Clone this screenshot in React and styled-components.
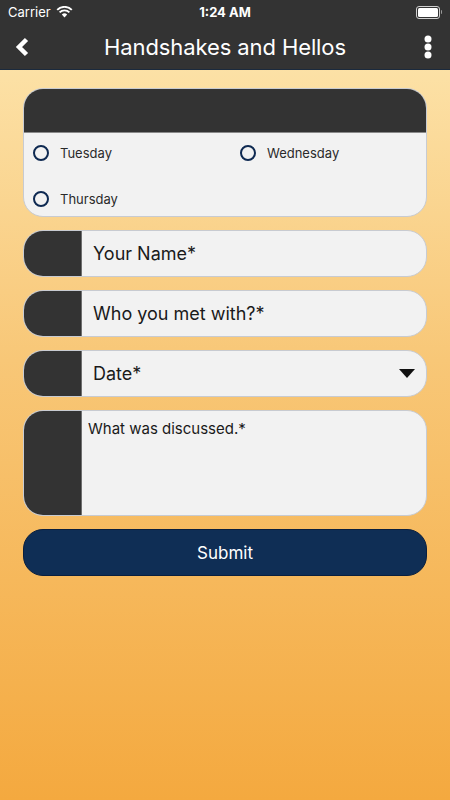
import React from "react";
import styled, { createGlobalStyle } from "styled-components";

const GlobalStyle = createGlobalStyle`
  html, body {
    margin: 0;
    padding: 0;
  }
  body {
    font-family: Inter, "Noto Sans", sans-serif;
  }
`;

const Screen = styled.div`
  width: 450px;
  min-height: 800px;
  display: flex;
  flex-direction: column;
  background: linear-gradient(180deg, #fde7b1 0%, #f8c777 45%, #f4a93f 100%);
`;

const StatusBar = styled.div`
  height: 24px;
  background: #333333;
  color: #fff;
  display: grid;
  grid-template-columns: 1fr auto 1fr;
  align-items: center;
  padding: 0 8px;
  font-size: 13px;
`;

const Carrier = styled.div`
  display: flex;
  align-items: center;
  gap: 5px;
`;

const Clock = styled.div`
  font-weight: 700;
`;

const Battery = styled.div`
  justify-self: end;
  display: flex;
  align-items: center;
  gap: 1px;
`;

const BatteryBody = styled.div`
  width: 20px;
  height: 9px;
  border: 1px solid #cfcfcf;
  border-radius: 3px;
  padding: 1px;
  & > div {
    width: 100%;
    height: 100%;
    background: #fff;
    border-radius: 1.5px;
  }
`;

const BatteryTip = styled.div`
  width: 1.5px;
  height: 4px;
  background: #999;
  border-radius: 0 1px 1px 0;
`;

const NavBar = styled.div`
  height: 45px;
  background: #333333;
  border-bottom: 1px solid #1b2a3d;
  display: flex;
  align-items: center;
  justify-content: space-between;
  padding: 0 14px;
  color: #fff;
`;

const NavTitle = styled.div`
  font-size: 22px;
  letter-spacing: -0.1px;
`;

const IconButton = styled.div`
  width: 16px;
  display: flex;
  justify-content: center;
`;

const Content = styled.div`
  display: flex;
  flex-direction: column;
  gap: 13px;
  padding: 18px 23px;
`;

const Card = styled.div`
  background: #f2f2f2;
  border: 1px solid #c8cbd1;
  border-radius: 20px;
  overflow: hidden;
`;

const CardHeader = styled.div`
  height: 43px;
  background: #333333;
  border-bottom: 1px solid #8a8a8a;
`;

const RadioGrid = styled.div`
  display: grid;
  grid-template-columns: 207px 1fr;
  grid-auto-rows: 30px;
  row-gap: 16px;
  padding: 5px 9px 2px;
`;

const RadioItem = styled.label`
  display: flex;
  align-items: center;
  gap: 11px;
  font-size: 13px;
  color: #2a2a2a;
`;

const RadioCircle = styled.span`
  width: 12px;
  height: 12px;
  border: 2px solid #0f2a52;
  border-radius: 50%;
`;

const Row = styled.div`
  height: ${(p) => p.height || 45}px;
  display: flex;
  background: #f2f2f2;
  border: 1px solid #c8cbd1;
  border-radius: 20px;
  overflow: hidden;
`;

const Side = styled.div`
  width: 57px;
  flex-shrink: 0;
  background: #333333;
  border-right: 1px solid #6f6f6f;
`;

const Field = styled.div`
  flex: 1;
  display: flex;
  align-items: ${(p) => (p.top ? "flex-start" : "center")};
  justify-content: space-between;
  padding: ${(p) => (p.top ? "8px 6px" : "0 11px")};
  font-size: ${(p) => (p.top ? "15px" : "18px")};
  color: #1a1a1a;
`;

const Caret = styled.span`
  width: 0;
  height: 0;
  border-left: 8px solid transparent;
  border-right: 8px solid transparent;
  border-top: 9px solid #111;
`;

const SubmitButton = styled.button`
  height: 47px;
  border: 1px solid #0a1f3e;
  border-radius: 20px;
  background: #0f2e55;
  color: #fff;
  font-family: inherit;
  font-size: 17px;
`;

const days = ["Tuesday", "Wednesday", "Thursday"];

export default function App() {
  return (
    <>
      <GlobalStyle />
      <Screen>
        <StatusBar>
          <Carrier>
            Carrier
            <svg width="17" height="12" viewBox="0 0 17 12">
              <path d="M8.5 11.5 L5.8 8.6 A3.8 3.8 0 0 1 11.2 8.6 Z" fill="#fff" />
              <path d="M3.6 6.4 A6.9 6.9 0 0 1 13.4 6.4" stroke="#fff" strokeWidth="1.9" fill="none" />
              <path d="M1.2 3.9 A10.3 10.3 0 0 1 15.8 3.9" stroke="#fff" strokeWidth="1.9" fill="none" />
            </svg>
          </Carrier>
          <Clock>1:24 AM</Clock>
          <Battery>
            <BatteryBody>
              <div />
            </BatteryBody>
            <BatteryTip />
          </Battery>
        </StatusBar>
        <NavBar>
          <IconButton>
            <svg width="16" height="20" viewBox="0 0 16 20">
              <path d="M12.5 2.5 L5 10 L12.5 17.5" stroke="#fff" strokeWidth="4.5" fill="none" strokeLinejoin="miter" />
            </svg>
          </IconButton>
          <NavTitle>Handshakes and Hellos</NavTitle>
          <IconButton>
            <svg width="8" height="24" viewBox="0 0 8 24">
              <circle cx="4" cy="4" r="3.5" fill="#fff" />
              <circle cx="4" cy="12" r="3.5" fill="#fff" />
              <circle cx="4" cy="20" r="3.5" fill="#fff" />
            </svg>
          </IconButton>
        </NavBar>
        <Content>
          <Card>
            <CardHeader />
            <RadioGrid>
              {days.map((d) => (
                <RadioItem key={d}>
                  <RadioCircle />
                  {d}
                </RadioItem>
              ))}
            </RadioGrid>
          </Card>
          <Row>
            <Side />
            <Field>Your Name*</Field>
          </Row>
          <Row>
            <Side />
            <Field>Who you met with?*</Field>
          </Row>
          <Row>
            <Side />
            <Field>
              Date*
              <Caret />
            </Field>
          </Row>
          <Row height={104}>
            <Side />
            <Field top>What was discussed.*</Field>
          </Row>
          <SubmitButton>Submit</SubmitButton>
        </Content>
      </Screen>
    </>
  );
}
